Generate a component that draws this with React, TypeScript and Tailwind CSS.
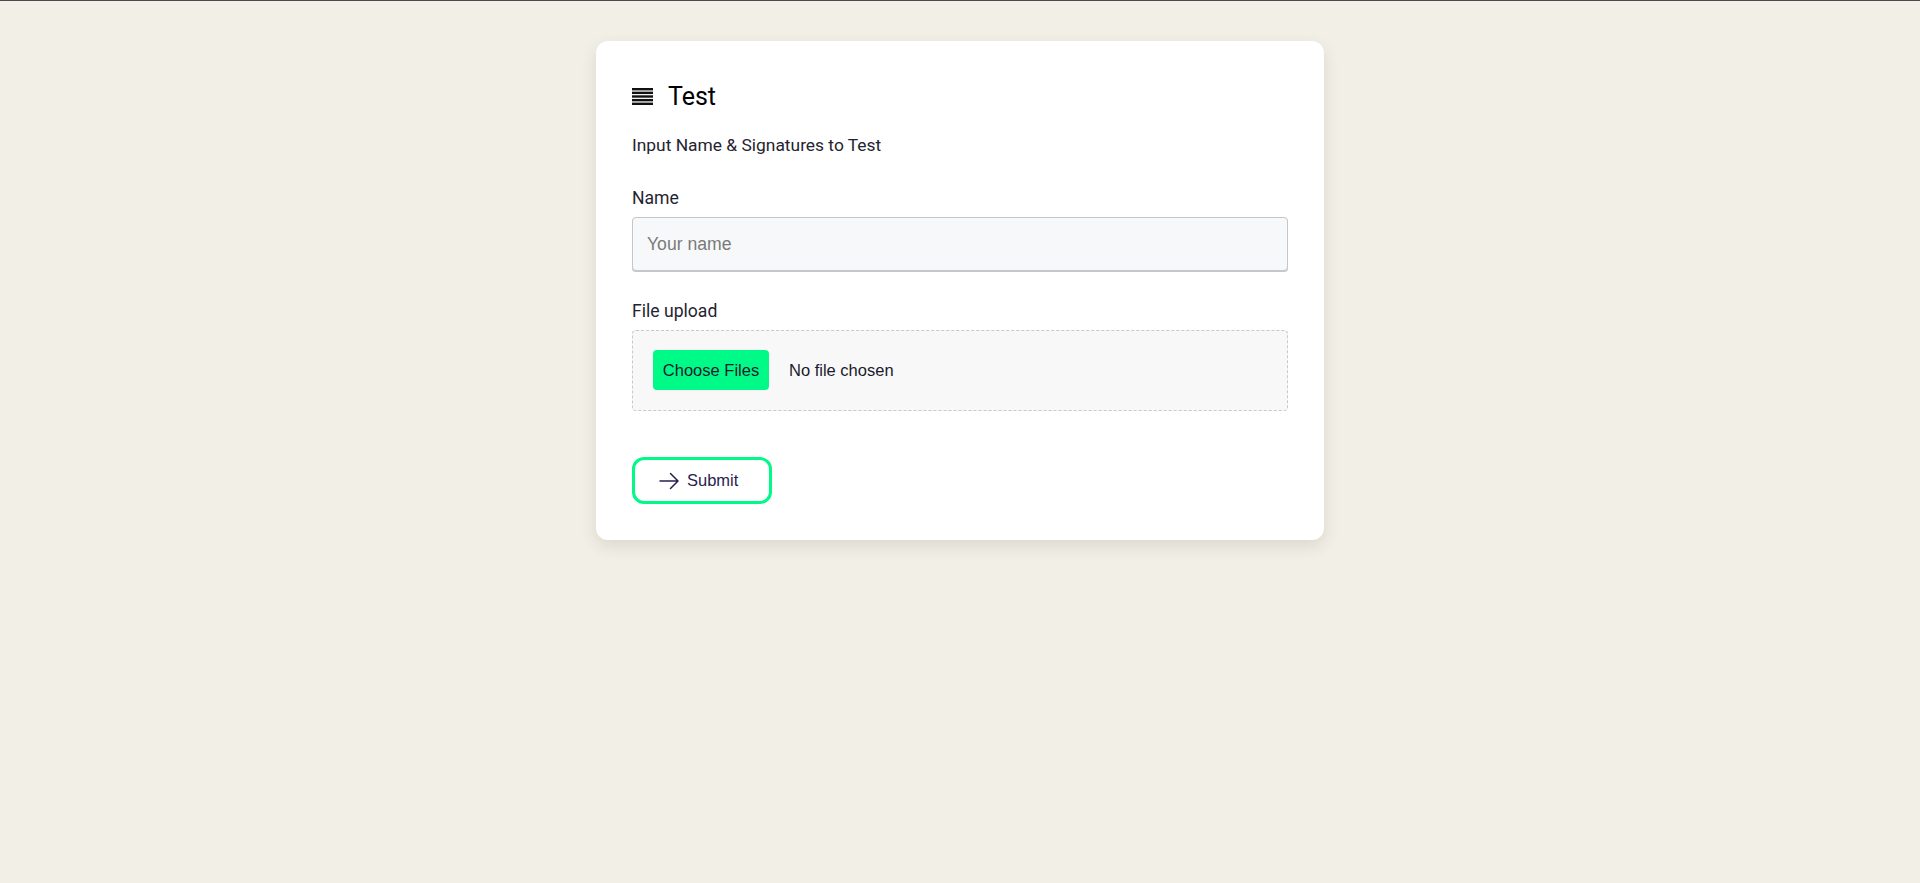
const ListIcon = () => (
  <svg width="21" height="17" viewBox="0 0 21 17" className="shrink-0 -mt-[2px]">
    <rect x="0" y="0" width="21" height="2.4" fill="#111" />
    <rect x="0" y="3.65" width="21" height="2.4" fill="#111" />
    <rect x="0" y="7.3" width="21" height="2.4" fill="#111" />
    <rect x="0" y="10.95" width="21" height="2.4" fill="#111" />
    <rect x="0" y="14.6" width="21" height="2.4" fill="#111" />
  </svg>
);

const ArrowIcon = () => (
  <svg
    width="24"
    height="24"
    viewBox="0 0 24 24"
    fill="none"
    stroke="currentColor"
    strokeWidth="1.5"
    strokeLinecap="round"
    strokeLinejoin="round"
  >
    <path d="M13.5 4.5 21 12m0 0-7.5 7.5M21 12H3" />
  </svg>
);

const App = () => {
  return (
    <div className="min-h-screen bg-[#f2efe7] border-t border-[#4a4a4a] pt-10 font-['Roboto',sans-serif]">
      <div className="mx-auto w-[728px] bg-white rounded-xl shadow-[0_6px_16px_rgba(60,50,30,0.12)] px-9 pt-[40px] pb-9">
        <div className="flex items-center gap-[15px] h-8">
          <ListIcon />
          <h1 className="text-[25px] leading-8 text-black">Test</h1>
        </div>
        <p className="mt-[19px] text-[17.4px] leading-[26px] text-[#1f2430]">
          Input Name &amp; Signatures to Test
        </p>

        <label className="block mt-[27px] text-[17.6px] leading-[26px] text-[#1f2430]">Name</label>
        <input
          type="text"
          placeholder="Your name"
          className="mt-[6px] block w-full h-[54px] rounded border border-[#c3c7cc] shadow-[0_1px_0_#c3c7cc] bg-[#f7f8fa] px-[14px] text-[17.6px] font-['Liberation_Sans',sans-serif] placeholder:text-[#7a7a7a] outline-none"
        />

        <label className="block mt-[27px] text-[17.6px] leading-[26px] text-[#1f2430]">File upload</label>
        <div className="mt-[6px] h-[81px] flex items-center gap-5 px-5 pb-px rounded border border-dashed border-[#c9c9c9] bg-[#f8f8f8] font-['Liberation_Sans',sans-serif] text-[16.5px] text-[#1a1a2e]">
          <button className="h-10 w-[116px] rounded bg-[#00fa87] text-[#1a1a2e]">Choose Files</button>
          <span>No file chosen</span>
        </div>

        <button className="mt-[46px] flex items-center gap-[6px] w-[140px] h-[47px] pl-[22px] rounded-xl border-[3px] border-[#00fa87] bg-white text-[#2b1d4f] font-['Liberation_Sans',sans-serif] text-[16.5px]">
          <ArrowIcon />
          <span>Submit</span>
        </button>
      </div>
    </div>
  );
};

export default App;
